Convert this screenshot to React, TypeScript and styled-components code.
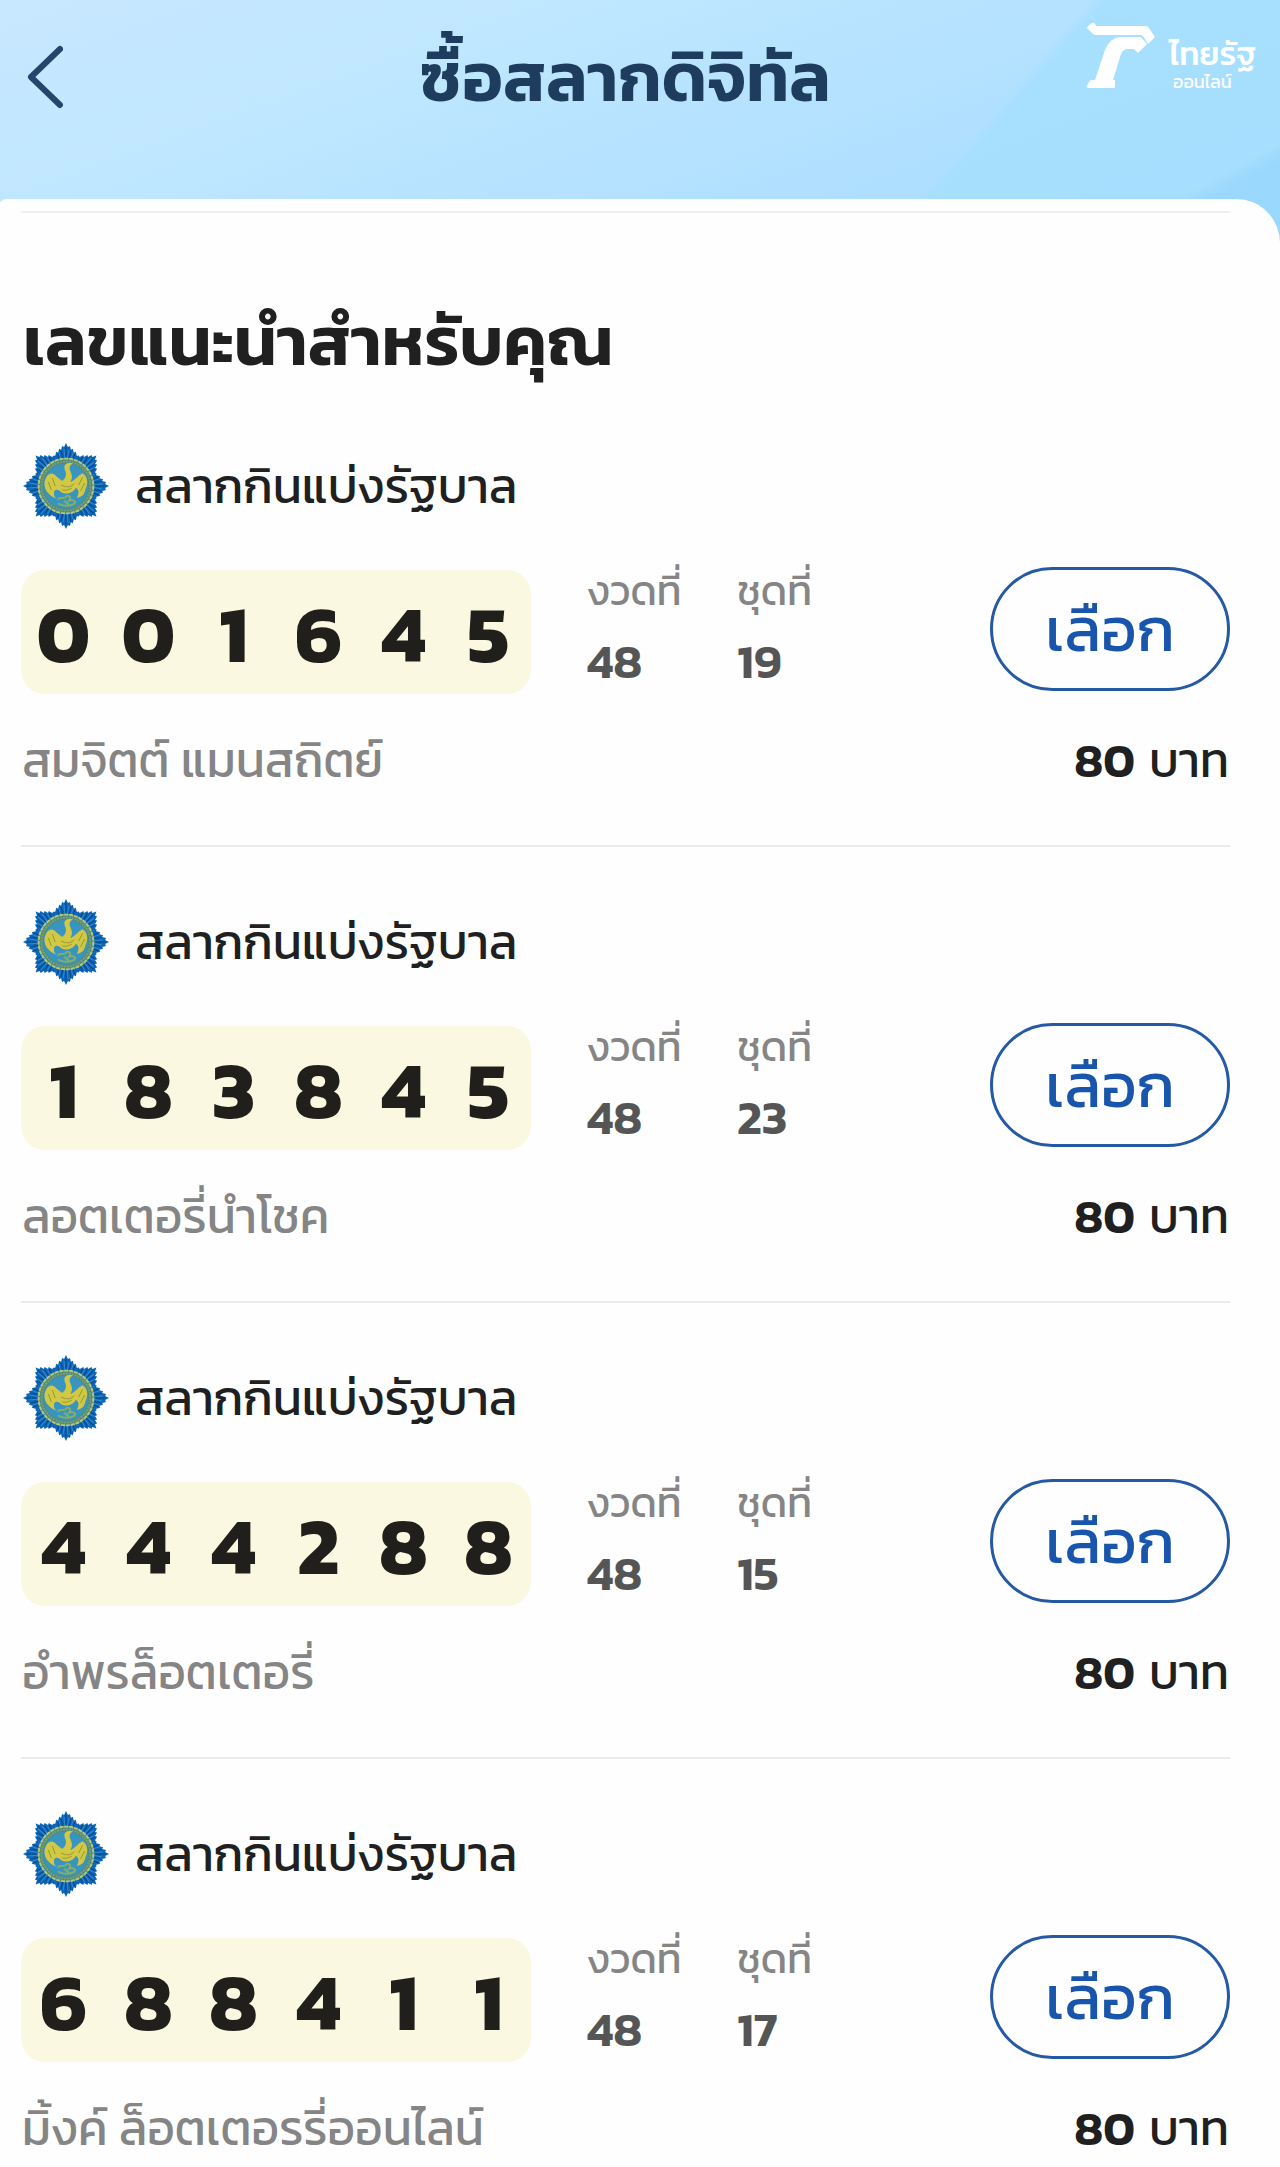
import React from "react";
import styled, { createGlobalStyle } from "styled-components";

const THAI = `Kanit, Prompt, "Noto Sans Thai", "Open Sans", sans-serif`;

const GlobalStyle = createGlobalStyle`
  *, *::before, *::after { box-sizing: border-box; }
  body {
    margin: 0;
    background: #fefefe;
    color: #202020;
    font-family: ${THAI};
  }
  h1, h2, h3, p, ul, dl, dd { margin: 0; padding: 0; }
`;

const Page = styled.div`
  overflow: hidden;
`;

const Header = styled.header`
  position: relative;
  display: grid;
  grid-template-columns: 48px 1fr 48px;
  align-items: center;
  padding: 37px 50px 130px 21px;
  background:
    linear-gradient(151deg, transparent 89%, rgba(143, 209, 253, 0.5) 91%),
    linear-gradient(131deg, transparent 73%, rgba(164, 223, 255, 0.75) 74%),
    linear-gradient(160deg, #c8e8ff 0%, #bfe7ff 30%, #b1e0ff 65%, #a6dbfe 100%);
`;

const BackButton = styled.button`
  display: flex;
  justify-content: center;
  width: 48px;
  padding: 0;
  border: 0;
  background: none;
  color: #24466b;
  cursor: pointer;
`;

const Title = styled.h1`
  color: #1d3c5e;
  font-size: 69px;
  font-weight: 600;
  line-height: 80px;
  text-align: center;
`;

const Publisher = styled.a`
  position: absolute;
  top: 22px;
  right: 24px;
  display: flex;
  gap: 14px;
  color: #fff;
  text-decoration: none;
`;

const PublisherName = styled.span`
  display: flex;
  flex-direction: column;
  padding-top: 14px;
`;

const PublisherMain = styled.span`
  font-size: 33px;
  font-weight: 500;
  line-height: 36px;
`;

const PublisherSub = styled.span`
  padding-left: 4px;
  font-size: 18px;
  font-weight: 400;
  line-height: 20px;
`;

const Sheet = styled.main`
  position: relative;
  margin-top: -48px;
  padding: 12px 50px 0 21px;
  border-radius: 8px 44px 0 0 / 4px 44px 0 0;
  background: #fefefe;
`;

const SectionTitle = styled.h2`
  padding: 88px 0 10px 2px;
  border-top: 2px solid #f0f0f0;
  font-size: 69px;
  font-weight: 600;
  line-height: 80px;
`;

const TicketList = styled.ul`
  list-style: none;
`;

const Ticket = styled.li`
  padding: 52px 0 55px;
  border-bottom: 2px solid #ebebeb;

  &:last-child {
    padding-bottom: 6px;
    border-bottom: 0;
  }
`;

const TicketHead = styled.div`
  display: flex;
  align-items: center;
  gap: 26px;
  padding-left: 2px;
`;

const TicketName = styled.h3`
  font-size: 48px;
  font-weight: 400;
  line-height: 60px;
`;

const TicketBody = styled.div`
  display: flex;
  align-items: flex-start;
  margin-top: 38px;
`;

const NumberBox = styled.div`
  display: grid;
  grid-template-columns: repeat(6, 85px);
  margin: 3px 56px 0 0;
  padding-top: 4px;
  border-radius: 24px;
  background: #faf8e0;
  color: #211f1c;
  font-size: 80px;
  font-weight: 700;
  line-height: 120px;
  text-align: center;
`;

const Stats = styled.dl`
  display: flex;
`;

const Stat = styled.div`
  display: flex;
  flex-direction: column;
  gap: 22px;
  width: 150px;
  line-height: 48px;
`;

const StatLabel = styled.dt`
  color: #858585;
  font-size: 41px;
  font-weight: 400;
`;

const StatValue = styled.dd`
  color: #555;
  font-size: 48px;
  font-weight: 600;
`;

const SelectButton = styled.button`
  width: 240px;
  height: 124px;
  margin-left: auto;
  padding: 0;
  border: 3px solid #2459a3;
  border-radius: 62px;
  background: #fefefe;
  color: #1956ab;
  font-family: inherit;
  font-size: 62px;
  font-weight: 400;
  line-height: 80px;
  cursor: pointer;
`;

const TicketFoot = styled.div`
  display: flex;
  justify-content: space-between;
  margin-top: 36px;
  padding: 0 1px;
  font-size: 48px;
  font-weight: 400;
  line-height: 60px;
`;

const Seller = styled.p`
  color: #858585;
`;

const Price = styled.p`
  display: flex;
  gap: 14px;

  strong {
    font-weight: 600;
  }
`;

const rays = Array.from({ length: 8 }, (_, i) => i * 45);

function Emblem() {
  return (
    <svg width="86" height="86" viewBox="-44 -44 88 88" aria-hidden="true">
      {rays.map((angle) => (
        <g key={angle} transform={`rotate(${angle})`}>
          <path
            d="M0-44L2-40L4-41L5-37L7-38L8-34L10-35L11-31L13-31L8-18H-8L-13-31L-11-31L-10-35L-8-34L-7-38L-5-37L-4-41L-2-40Z"
            fill="#0d66b8"
          />
          <path
            d="M0-40V-26M-5-36L-3-26M5-36L3-26M-9-33L-6-25M9-33L6-25"
            stroke="#0a4483"
            strokeWidth="1"
            fill="none"
          />
          <path
            d="M-2-38L-1-26M3-37L1-26M-7-34L-5-26M7-34L5-26"
            stroke="#2c8bd6"
            strokeWidth="1"
            fill="none"
          />
        </g>
      ))}
      <circle r="29" fill="#4d8a86" />
      <circle r="28" fill="none" stroke="#b5c878" strokeWidth="2" strokeDasharray="4 1" />
      <circle r="25" fill="none" stroke="#7f9f66" strokeWidth="2" strokeDasharray="2 1" />
      <circle r="23" fill="#3795bf" />
      <path
        d="M-22-4C-20-13-14-15-10-10L-4-5C0-8 1-12-1-16C-3-21 0-25 7-23C3-21 3-18 5-14C7-9 6-6 4-4C9-5 12-11 17-13C22-10 23-3 20 3C19 8 16 12 11 12C14 7 13 3 10 2C7 7 1 9-4 7C-7 4-10 3-12 5C-13 8-12 11-10 13C-18 10-23 3-22-4Z"
        fill="#d3c843"
      />
      <path
        d="M-18-4L-15 4M-14-8L-11 0M17-9L13-1M19-3L15 5M-5-1C0 2 5 1 8-2M-4 4C0 5 3 4 6 2"
        stroke="#8c9a34"
        strokeWidth="1"
        fill="none"
      />
      <path
        d="M-9 14C-5 10-2 14 0 11C3 8 6 12 3 15C7 14 10 15 9 18C4 21-4 21-8 18M-2 15L3 19"
        stroke="#86ad66"
        strokeWidth="2"
        fill="none"
      />
    </svg>
  );
}

function PublisherMark() {
  return (
    <svg width="68" height="68" viewBox="0 0 68 68" fill="#fff" aria-hidden="true">
      <path d="M1 4L5 1Q7 0 8 2L9 4H58Q61 4 62 6L68 15L61 22L56 14Q55 13 53 13H9Q6 13 5 11L0 6Z" />
      <path d="M33 15H54L60 22L51 31L47 27H41Q36 27 34 32L26 58H28V65Q28 66 26 66H1Q0 66 0 64L2 60Q3 58 5 58H8L18 28Q23 16 33 15Z" />
    </svg>
  );
}

interface TicketData {
  digits: string;
  draw: string;
  set: string;
  seller: string;
}

const tickets: TicketData[] = [
  { digits: "001645", draw: "48", set: "19", seller: "สมจิตต์ แมนสถิตย์" },
  { digits: "183845", draw: "48", set: "23", seller: "ลอตเตอรี่นำโชค" },
  { digits: "444288", draw: "48", set: "15", seller: "อำพรล็อตเตอรี่" },
  { digits: "688411", draw: "48", set: "17", seller: "มิ้งค์ ล็อตเตอรรี่ออนไลน์" },
];

export default function App() {
  return (
    <Page lang="th">
      <GlobalStyle />
      <Header>
        <BackButton type="button" aria-label="ย้อนกลับ">
          <svg width="36" height="64" viewBox="0 0 36 64" fill="none" aria-hidden="true">
            <path
              d="M33 4L4 32L33 60"
              stroke="currentColor"
              strokeWidth="6"
              strokeLinecap="round"
              strokeLinejoin="round"
            />
          </svg>
        </BackButton>
        <Title>ซื้อสลากดิจิทัล</Title>
        <Publisher href="#">
          <PublisherMark />
          <PublisherName>
            <PublisherMain>ไทยรัฐ</PublisherMain>
            <PublisherSub>ออนไลน์</PublisherSub>
          </PublisherName>
        </Publisher>
      </Header>
      <Sheet>
        <SectionTitle>เลขแนะนำสำหรับคุณ</SectionTitle>
        <TicketList>
          {tickets.map((ticket) => (
            <Ticket key={ticket.digits}>
              <TicketHead>
                <Emblem />
                <TicketName>สลากกินแบ่งรัฐบาล</TicketName>
              </TicketHead>
              <TicketBody>
                <NumberBox>
                  {ticket.digits.split("").map((digit, i) => (
                    <span key={i}>{digit}</span>
                  ))}
                </NumberBox>
                <Stats>
                  <Stat>
                    <StatLabel>งวดที่</StatLabel>
                    <StatValue>{ticket.draw}</StatValue>
                  </Stat>
                  <Stat>
                    <StatLabel>ชุดที่</StatLabel>
                    <StatValue>{ticket.set}</StatValue>
                  </Stat>
                </Stats>
                <SelectButton type="button">เลือก</SelectButton>
              </TicketBody>
              <TicketFoot>
                <Seller>{ticket.seller}</Seller>
                <Price>
                  <strong>80</strong>
                  <span>บาท</span>
                </Price>
              </TicketFoot>
            </Ticket>
          ))}
        </TicketList>
      </Sheet>
    </Page>
  );
}
